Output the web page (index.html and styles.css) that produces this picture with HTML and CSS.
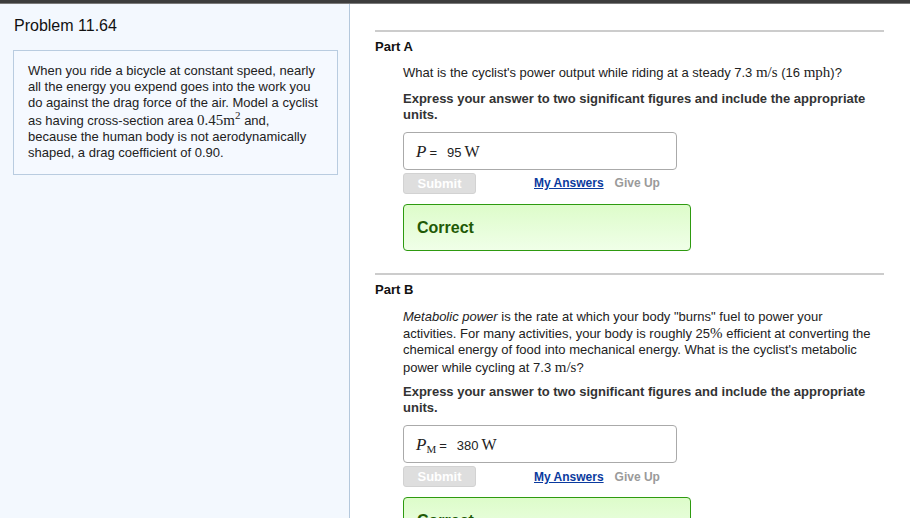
FILE: index.html
```html
<!DOCTYPE html>
<html lang="en">
<head>
    <meta charset="UTF-8">
    <title>Problem 11.64</title>
    <link rel="stylesheet" href="styles.css">
</head>
<body>
<div class="topbar"></div>
<div class="page">
    <div class="sidebar">
        <h1 class="problemTitle">Problem 11.64</h1>
        <div class="problemText">
            When you ride a bicycle at constant speed, nearly<br>
            all the energy you expend goes into the work you<br>
            do against the drag force of the air. Model a cyclist<br>
            as having cross-section area <span class="math">0.45m<sup>2</sup></span> and,<br>
            because the human body is not aerodynamically<br>
            shaped, a drag coefficient of 0.90.
        </div>
    </div>
    <div class="main">
        <div class="part">
            <h2 class="partTitle">Part A</h2>
            <div class="partBody">
                <p class="question">What is the cyclist's power output while riding at a steady 7.3 <span class="math">m/s</span> (16 <span class="math">mph</span>)?</p>
                <p class="instruction">Express your answer to two significant figures and include the appropriate units.</p>
                <div class="answerBox">
                    <span class="var">P</span><span class="eq">=</span><span class="value">95</span><span class="unit">W</span>
                </div>
                <div class="actions">
                    <button class="submit" disabled>Submit</button>
                    <a class="myAnswers" href="#">My Answers</a>
                    <span class="giveUp">Give Up</span>
                </div>
                <div class="feedback">Correct</div>
            </div>
        </div>
        <div class="part">
            <h2 class="partTitle">Part B</h2>
            <div class="partBody">
                <p class="question long"><em>Metabolic power</em> is the rate at which your body "burns" fuel to power your<br>
                    activities. For many activities, your body is roughly 25<span class="math">%</span> efficient at converting the<br>
                    chemical energy of food into mechanical energy. What is the cyclist's metabolic<br>
                    power while cycling at 7.3 <span class="math">m/s</span>?</p>
                <p class="instruction after">Express your answer to two significant figures and include the appropriate units.</p>
                <div class="answerBox">
                    <span class="var">P<sub>M</sub></span><span class="eq">=</span><span class="value">380</span><span class="unit">W</span>
                </div>
                <div class="actions">
                    <button class="submit" disabled>Submit</button>
                    <a class="myAnswers" href="#">My Answers</a>
                    <span class="giveUp">Give Up</span>
                </div>
                <div class="feedback">Correct</div>
            </div>
        </div>
    </div>
</div>
</body>
</html>
```

FILE: styles.css
```css
html, body {
    height: 100%;
}

body {
    margin: 0;
    overflow: hidden;
    font-family: "Liberation Sans", Arial, sans-serif;
    font-size: 13px;
    color: #222;
    background: #fff;
}

.topbar {
    height: 3px;
    background: #3d3d3d;
    border-bottom: 1px solid #7a7a7a;
}

.page {
    display: flex;
    height: calc(100% - 4px);
}

.sidebar {
    width: 336px;
    flex: none;
    padding: 0 0 0 13px;
    background: #f3f8fe;
    border-right: 1px solid #b4c8dc;
}

.problemTitle {
    margin: 12px 0 0 1px;
    font-size: 16px;
    font-weight: normal;
    line-height: 20px;
    color: #111;
}

.problemText {
    width: 295px;
    margin-top: 14px;
    padding: 12px 14px 13px;
    border: 1px solid #b9cce0;
    background: #f5f9ff;
    line-height: 16.2px;
    color: #222;
    white-space: nowrap;
}

.math {
    font-family: "Liberation Serif", "Times New Roman", serif;
    font-size: 15px;
}

.math sup {
    font-size: 11px;
    line-height: 0;
}

.main {
    flex: 1;
    padding: 0 26px 0 25px;
}

.part {
    border-top: 2px solid #cccccc;
    margin-top: 26px;
}

.part + .part {
    margin-top: 22px;
}

.partTitle {
    margin: 7px 0 0;
    font-size: 13px;
    line-height: 16px;
    color: #111;
}

.partBody {
    padding-left: 28px;
}

.question {
    margin: 9px 0 0;
    line-height: 16.6px;
    white-space: nowrap;
}

.question.long {
    margin-top: 10px;
    padding-top: 1px;
    line-height: 16.4px;
}

.instruction {
    margin: 9px 0 0;
    font-weight: bold;
    line-height: 16px;
    color: #333;
}

.instruction.after {
    margin-top: 8px;
}

.answerBox {
    display: flex;
    align-items: baseline;
    width: 248px;
    height: 27px;
    margin-top: 9px;
    padding: 9px 12px 0;
    border: 1px solid #aaaaaa;
    border-radius: 4px;
    background: #fff;
}

.var {
    font-family: "Liberation Serif", "Times New Roman", serif;
    font-style: italic;
    font-size: 17px;
}

.var sub {
    font-style: normal;
    font-size: 11px;
    vertical-align: -3px;
    line-height: 0;
}

.eq {
    margin: 0 10px 0 3px;
    font-size: 13px;
}

.value {
    font-size: 13px;
    margin-right: 3px;
}

.unit {
    font-family: "Liberation Serif", "Times New Roman", serif;
    font-size: 16px;
}

.actions {
    display: flex;
    align-items: center;
    margin-top: 3px;
}

.submit {
    width: 73px;
    height: 21px;
    padding: 0;
    border: 1px solid #d2d2d2;
    border-radius: 3px;
    background: #dedede;
    color: #fff;
    font-family: "Liberation Sans", Arial, sans-serif;
    font-size: 13px;
    font-weight: bold;
}

.myAnswers {
    margin-left: 58px;
    font-size: 12px;
    font-weight: bold;
    color: #0a3a9e;
}

.giveUp {
    margin-left: 11px;
    font-size: 12px;
    font-weight: bold;
    color: #9a9a9a;
}

.feedback {
    width: 273px;
    height: 45px;
    margin-top: 10px;
    padding-left: 13px;
    border: 1px solid #2e9a10;
    border-radius: 4px;
    background: linear-gradient(#ddfcca, #f0ffe8);
    font-size: 16px;
    font-weight: bold;
    line-height: 45px;
    color: #1f5a06;
}
```
